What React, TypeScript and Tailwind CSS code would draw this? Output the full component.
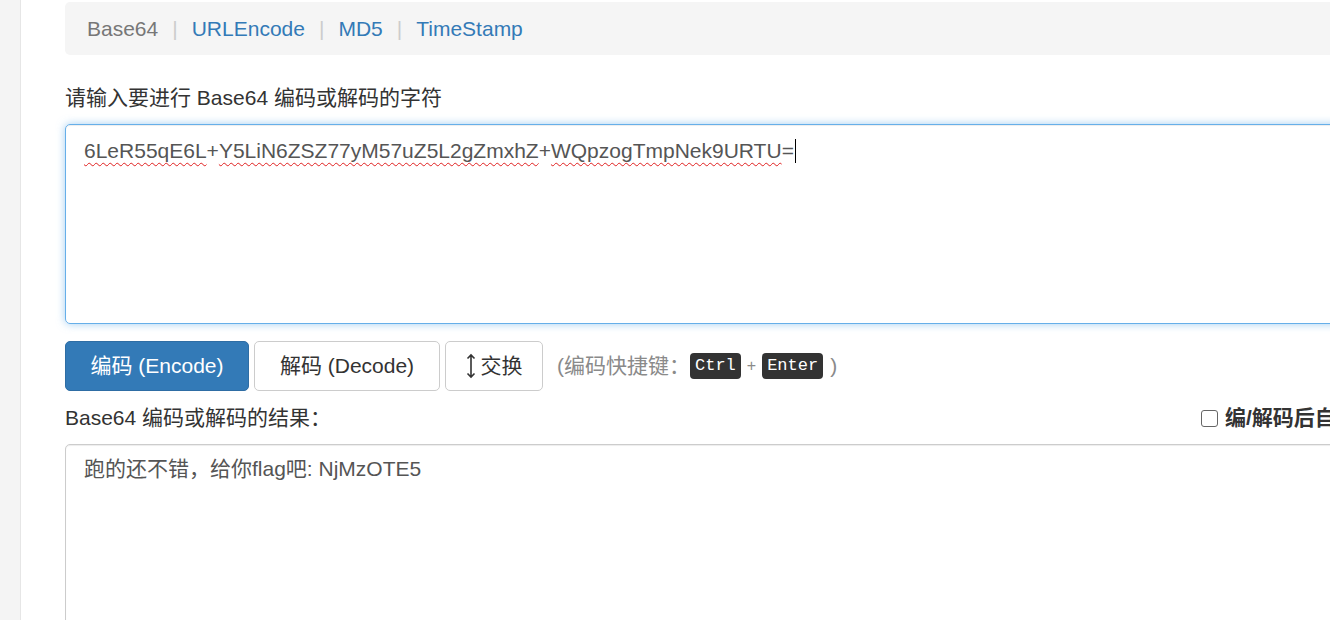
import React from "react";

const sans = "font-['Liberation_Sans','Noto_Sans_CJK_SC',sans-serif]";
const wavy =
  "underline decoration-wavy decoration-[#e02020] decoration-1 underline-offset-[4px]";

function Crumbs() {
  const items = ["URLEncode", "MD5", "TimeStamp"];
  return (
    <div className="flex h-[53px] items-center rounded-[5px] bg-[#f5f5f5] px-[22px]">
      <span className="text-[#777]">Base64</span>
      {items.map((t) => (
        <React.Fragment key={t}>
          <span className="mx-[14px] text-[#ccc]">|</span>
          <a className="text-[#337ab7]">{t}</a>
        </React.Fragment>
      ))}
    </div>
  );
}

function Kbd({ children }: { children: React.ReactNode }) {
  return (
    <kbd className="rounded-[4px] bg-[#333] px-[5px] py-[2px] font-['Liberation_Mono',monospace] text-[17px] leading-[22px] text-white">
      {children}
    </kbd>
  );
}

export default function App() {
  return (
    <div
      className={`flex h-[620px] w-[1330px] overflow-hidden bg-white text-[21px] leading-[30px] text-[#333] ${sans}`}
    >
      <div className="w-[21px] shrink-0 border-r border-[#e6e6e6] bg-[#f4f4f4]" />
      <main className="ml-[44px] mt-[2px] w-[1400px] shrink-0">
        <Crumbs />

        <p className="mb-[11px] mt-[28px]">请输入要进行 Base64 编码或解码的字符</p>
        <div className="h-[200px] rounded-[5px] border border-[#66afe9] px-[18px] pt-[9px] text-[#555] shadow-[inset_0_1px_1px_rgba(0,0,0,.075),0_0_8px_rgba(102,175,233,.6)]">
          <span className={wavy}>6LeR55qE6L</span>+
          <span className={wavy}>Y5LiN6ZSZ77yM57uZ5L2gZmxhZ</span>+
          <span className={wavy}>WQpzogTmpNek9URTU</span>=
          <span className="ml-[1px] inline-block h-[24px] translate-y-[5px] border-l border-black" />
        </div>

        <div className="mt-[17px] flex items-center gap-[5px]">
          <button className="h-[50px] w-[184px] rounded-[5px] border border-[#2e6da4] bg-[#337ab7] text-white">
            编码 (Encode)
          </button>
          <button className="h-[50px] w-[186px] rounded-[5px] border border-[#ccc] bg-white text-[#333]">
            解码 (Decode)
          </button>
          <button className="flex h-[50px] w-[98px] items-center justify-center gap-[5px] rounded-[5px] border border-[#ccc] bg-white text-[#333]">
            <svg width="10" height="26" viewBox="0 0 10 26" fill="none" stroke="#333" strokeWidth="1.6">
              <path d="M5 2v22M1.5 5.5 5 2l3.5 3.5M1.5 20.5 5 24l3.5-3.5" />
            </svg>
            交换
          </button>
          <span className="ml-[9px] flex items-center text-[#8a8a8a]">
            (编码快捷键：
            <Kbd>Ctrl</Kbd>
            <span className="mx-[6px] text-[16px]">+</span>
            <Kbd>Enter</Kbd>
            <span className="ml-[7px]">)</span>
          </span>
        </div>

        <div className="mt-[12px] flex items-center">
          <span className="w-[1136px] shrink-0">Base64 编码或解码的结果：</span>
          <label className="flex items-center gap-[7px] font-bold">
            <input
              type="checkbox"
              className="h-[17px] w-[17px] appearance-none rounded-[3px] border-[1.5px] border-[#666] bg-white"
            />
            编/解码后自动复制
          </label>
        </div>

        <div className="mt-[11px] h-[300px] rounded-[5px] border border-[#ccc] px-[18px] pt-[9px] text-[#555] shadow-[inset_0_1px_1px_rgba(0,0,0,.075)]">
          跑的还不错，给你flag吧: NjMzOTE5
        </div>
      </main>
    </div>
  );
}
